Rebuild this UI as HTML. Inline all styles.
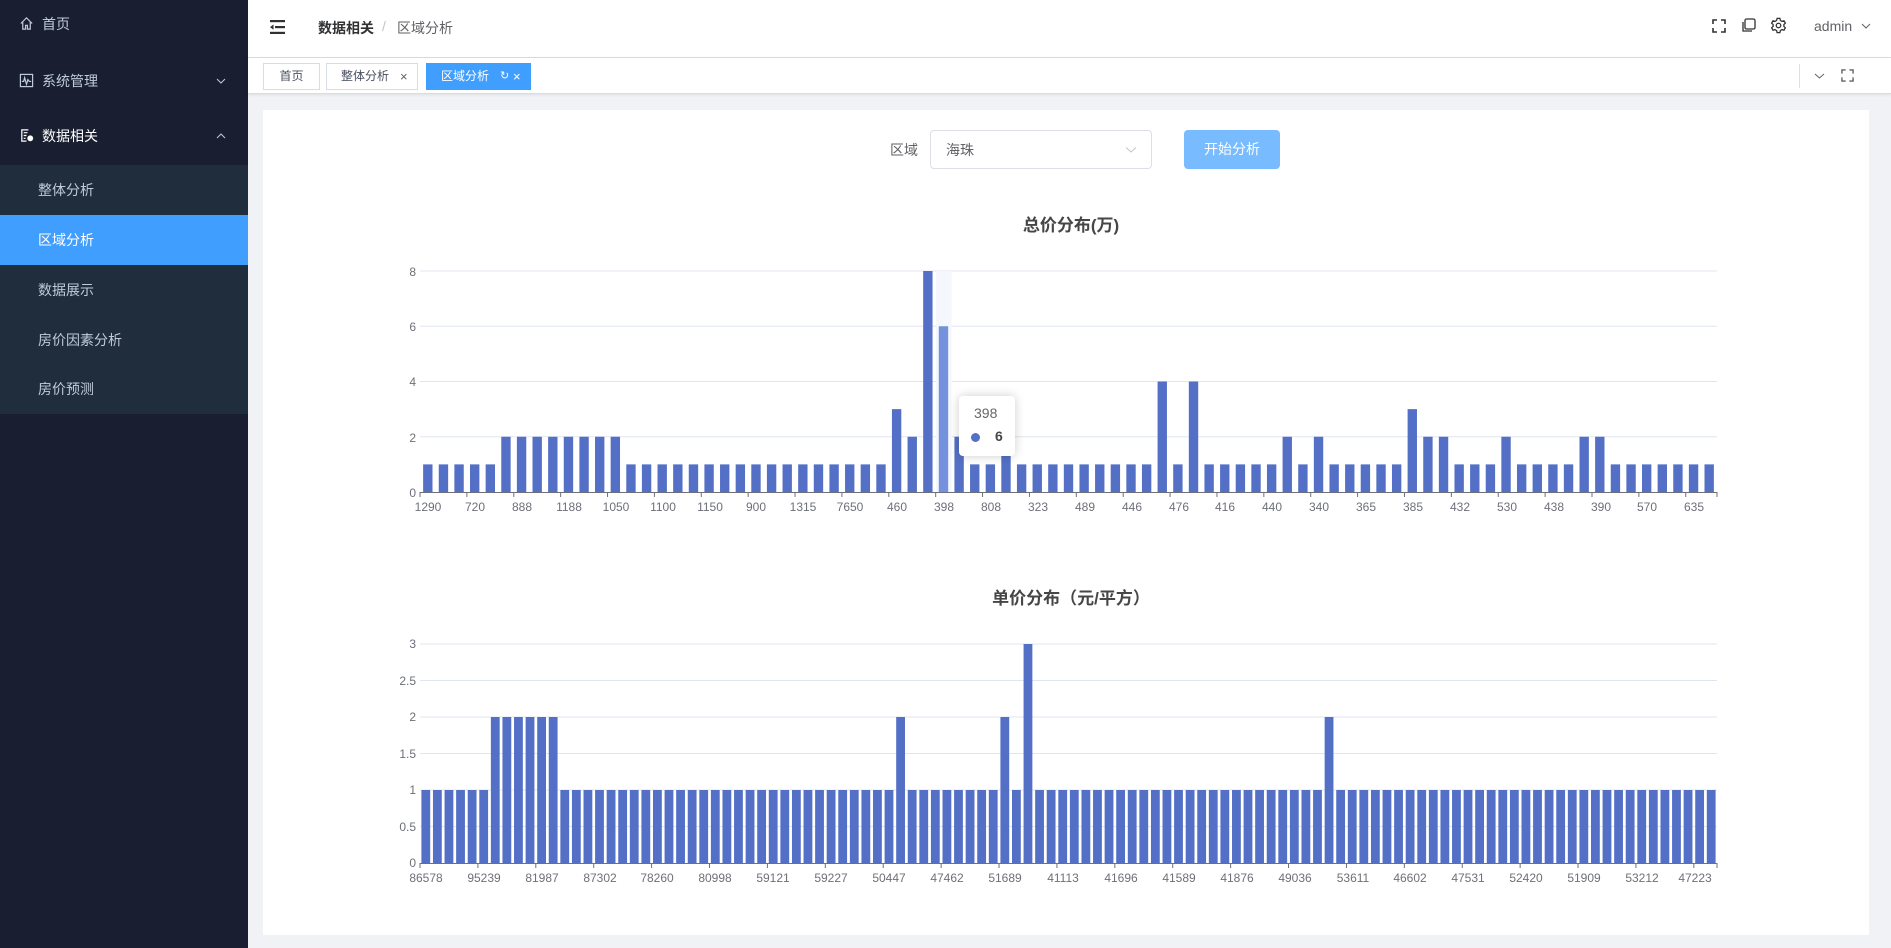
<!DOCTYPE html>
<html><head><meta charset="utf-8">
<style>
*{margin:0;padding:0;box-sizing:border-box}
body{width:1891px;height:948px;overflow:hidden;font-family:"Liberation Sans","Noto Sans CJK SC",sans-serif;background:#f0f2f5;position:relative;color:#303133}
.abs{position:absolute}
#side{left:0;top:0;width:248px;height:948px;background:#191f30}
.mi{position:absolute;left:0;width:248px;color:#bfcbd9;font-size:14px;line-height:20px}
.sub{position:absolute;left:0;top:165px;width:248px;height:249px;background:#1f2d3d}
.si{position:absolute;left:0;width:248px;height:50px;line-height:50px;padding-left:38px;color:#bfcbd9;font-size:14px}
.si.act{background:#409eff;color:#fff}
#hdr{left:248px;top:0;width:1643px;height:58px;background:#fff;border-bottom:1px solid #d8dce5}
#tags{left:248px;top:58px;width:1643px;height:36px;background:#fff;border-bottom:1px solid #d8dce5;box-shadow:0 1px 3px rgba(0,0,0,.08)}
.tag{position:absolute;top:5px;height:27px;line-height:25px;border:1px solid #d8dce5;font-size:12px;color:#495060;background:#fff}
#card{left:263px;top:110px;width:1606px;height:825px;background:#fff}
</style></head><body>
<div id="side" class="abs">
  <div class="mi" style="top:14px">
    <svg class="abs" style="left:19px;top:2px" width="15" height="15" viewBox="0 0 16 16" fill="none" stroke="#bfcbd9" stroke-width="1.3"><path d="M2 8 L8 2 L14 8 M4 6.5 V14 H7 V10 H9 V14 H12 V6.5"/></svg>
    <span class="abs" style="left:42px">首页</span></div>
  <div class="mi" style="top:71px">
    <svg class="abs" style="left:19px;top:2px" width="15" height="15" viewBox="0 0 16 16" fill="none" stroke="#bfcbd9" stroke-width="1.3"><rect x="1.5" y="1.5" width="13" height="13"/><path d="M3 9 H5 L6 5 L8 12 L9.5 7 L11 9 H13"/></svg>
    <span class="abs" style="left:42px">系统管理</span>
    <svg class="abs" style="left:216px;top:5px" width="10" height="10" viewBox="0 0 10 10" fill="none" stroke="#bfcbd9"><path d="M1 3 L5 7 L9 3"/></svg></div>
  <div class="mi" style="top:126px;color:#fff">
    <svg class="abs" style="left:19px;top:2px" width="15" height="15" viewBox="0 0 16 16" fill="none" stroke="#fff" stroke-width="1.3"><path d="M10 2 H3 V14 H8 M5 5 H9 M5 8 H8 M5 11 H7"/><circle cx="12" cy="11" r="2.5" fill="#fff"/></svg>
    <span class="abs" style="left:42px">数据相关</span>
    <svg class="abs" style="left:216px;top:5px" width="10" height="10" viewBox="0 0 10 10" fill="none" stroke="#bfcbd9"><path d="M1 7 L5 3 L9 7"/></svg></div>
  <div class="sub">
    <div class="si" style="top:0">整体分析</div>
    <div class="si act" style="top:50px">区域分析</div>
    <div class="si" style="top:100px">数据展示</div>
    <div class="si" style="top:150px">房价因素分析</div>
    <div class="si" style="top:199px">房价预测</div>
  </div>
</div>
<div id="hdr" class="abs">
  <svg class="abs" style="left:22px;top:20px" width="15" height="14" viewBox="0 0 15 14" fill="#303133"><rect x="0" y="0" width="15" height="2.2"/><rect x="5" y="6" width="10" height="2.2"/><rect x="0" y="11.8" width="15" height="2.2"/><path d="M0 7.1 L3.5 4.5 V9.7Z"/></svg>
  <span class="abs" style="left:70px;top:18px;font-size:14px;font-weight:bold;color:#303133">数据相关</span>
  <span class="abs" style="left:134px;top:18px;font-size:14px;color:#c0c4cc">/</span>
  <span class="abs" style="left:149px;top:18px;font-size:14px;color:#606266">区域分析</span>
  <svg class="abs" style="left:1464px;top:19px" width="14" height="14" viewBox="0 0 14 14" fill="none" stroke="#303133" stroke-width="1.6"><path d="M1 5V1H5M9 1H13V5M13 9V13H9M5 13H1V9"/></svg>
  <svg class="abs" style="left:1493px;top:18px" width="15" height="15" viewBox="0 0 15 15" fill="none" stroke="#303133" stroke-width="1.3"><rect x="4" y="1" width="10" height="10" rx="1.5"/><path d="M2 4V13H11"/></svg>
  <svg class="abs" style="left:1522px;top:17px" width="17" height="17" viewBox="0 0 24 24" fill="none" stroke="#303133" stroke-width="1.8"><circle cx="12" cy="12" r="3.2"/><path d="M10 2h4l.6 2.8 2.4 1.4 2.7-.9 2 3.4-2.1 1.9v2.8l2.1 1.9-2 3.4-2.7-.9-2.4 1.4L14 22h-4l-.6-2.8-2.4-1.4-2.7.9-2-3.4 2.1-1.9v-2.8L2.3 8.7l2-3.4 2.7.9 2.4-1.4z"/></svg>
  <span class="abs" style="left:1566px;top:18px;font-size:14px;color:#606266">admin</span>
  <svg class="abs" style="left:1613px;top:22px" width="10" height="8" viewBox="0 0 10 8" fill="none" stroke="#606266"><path d="M1 2 L5 6 L9 2"/></svg>
</div>
<div id="tags" class="abs">
  <div class="tag" style="left:15px;width:57px;text-align:center">首页</div>
  <div class="tag" style="left:78px;width:92px;padding-left:14px">整体分析<span class="abs" style="left:73px;top:0;font-size:13px;color:#606266">×</span></div>
  <div class="tag" style="left:178px;width:105px;padding-left:14px;background:#409eff;border-color:#409eff;color:#fff">区域分析<span class="abs" style="left:73px;top:0;font-size:11px">↻</span><span class="abs" style="left:86px;top:0;font-size:13px">×</span></div>
  <div class="abs" style="left:1551px;top:-1px;width:1px;height:24px;background:#dcdfe6;top:6px"></div>
  <svg class="abs" style="left:1566px;top:14px" width="11" height="8" viewBox="0 0 11 8" fill="none" stroke="#606266"><path d="M1 2 L5.5 6 L10 2"/></svg>
  <svg class="abs" style="left:1593px;top:11px" width="13" height="13" viewBox="0 0 14 14" fill="none" stroke="#606266" stroke-width="1.5"><path d="M1 5V1H5M9 1H13V5M13 9V13H9M5 13H1V9"/></svg>
</div>
<div id="card" class="abs">
  <span class="abs" style="left:627px;top:30px;font-size:14px;color:#606266">区域</span>
  <div class="abs" style="left:667px;top:20px;width:222px;height:39px;border:1px solid #dcdfe6;border-radius:4px">
    <span class="abs" style="left:15px;top:9px;font-size:14px;color:#606266">海珠</span>
    <svg class="abs" style="left:194px;top:15px" width="12" height="8" viewBox="0 0 12 8" fill="none" stroke="#c0c4cc"><path d="M1 1.5 L6 6 L11 1.5"/></svg>
  </div>
  <div class="abs" style="left:921px;top:20px;width:96px;height:39px;border-radius:4px;background:#79bbff;color:#fff;font-size:14px;text-align:center;line-height:39px">开始分析</div>
</div>
<svg class="abs" style="left:0;top:0" width="1891" height="948" id="ch">
 <g font-family="Liberation Sans, Noto Sans CJK SC, sans-serif">
  <text x="1071" y="231" text-anchor="middle" font-size="17" font-weight="bold" fill="#464646">总价分布(万)</text>
  <text x="1071" y="604" text-anchor="middle" font-size="17" font-weight="bold" fill="#464646">单价分布（元/平方）</text>
  <g id="grid" stroke="#e0e6f1" stroke-width="1"></g>
  <rect x="936" y="271" width="15.6" height="221" fill="#f5f7fc"/>
  <g id="bars" fill="#5470c6"></g>
  <g id="axes" stroke="#6e7079" stroke-width="1"></g>
  <g font-size="12" fill="#6e7079" text-anchor="end">
   <text x="416" y="276">8</text><text x="416" y="331">6</text><text x="416" y="386">4</text><text x="416" y="442">2</text><text x="416" y="497">0</text>
   <text x="416" y="648">3</text><text x="416" y="685">2.5</text><text x="416" y="721">2</text><text x="416" y="758">1.5</text><text x="416" y="794">1</text><text x="416" y="831">0.5</text><text x="416" y="867">0</text>
  </g>
  <g font-size="12" fill="#6e7079" text-anchor="middle" id="xl1">
   <text x="428" y="511">1290</text><text x="475" y="511">720</text><text x="522" y="511">888</text><text x="569" y="511">1188</text><text x="616" y="511">1050</text><text x="663" y="511">1100</text><text x="710" y="511">1150</text><text x="756" y="511">900</text><text x="803" y="511">1315</text><text x="850" y="511">7650</text><text x="897" y="511">460</text><text x="944" y="511">398</text><text x="991" y="511">808</text><text x="1038" y="511">323</text><text x="1085" y="511">489</text><text x="1132" y="511">446</text><text x="1179" y="511">476</text><text x="1225" y="511">416</text><text x="1272" y="511">440</text><text x="1319" y="511">340</text><text x="1366" y="511">365</text><text x="1413" y="511">385</text><text x="1460" y="511">432</text><text x="1507" y="511">530</text><text x="1554" y="511">438</text><text x="1601" y="511">390</text><text x="1647" y="511">570</text><text x="1694" y="511">635</text>
  </g>
  <g font-size="12" fill="#6e7079" text-anchor="middle">
   <text x="426" y="882">86578</text><text x="484" y="882">95239</text><text x="542" y="882">81987</text><text x="600" y="882">87302</text><text x="657" y="882">78260</text><text x="715" y="882">80998</text><text x="773" y="882">59121</text><text x="831" y="882">59227</text><text x="889" y="882">50447</text><text x="947" y="882">47462</text><text x="1005" y="882">51689</text><text x="1063" y="882">41113</text><text x="1121" y="882">41696</text><text x="1179" y="882">41589</text><text x="1237" y="882">41876</text><text x="1295" y="882">49036</text><text x="1353" y="882">53611</text><text x="1410" y="882">46602</text><text x="1468" y="882">47531</text><text x="1526" y="882">52420</text><text x="1584" y="882">51909</text><text x="1642" y="882">53212</text><text x="1695" y="882">47223</text>
  </g>
 </g>
</svg>
<div class="abs" style="left:959px;top:396px;width:56px;height:60px;background:#fff;border-radius:4px;box-shadow:0 0 10px rgba(0,0,0,.2);font-family:'Liberation Sans',sans-serif">
  <span class="abs" style="left:15px;top:9px;font-size:14px;color:#666">398</span>
  <span class="abs" style="left:12px;top:37px;width:9px;height:9px;border-radius:50%;background:#5470c6"></span>
  <span class="abs" style="left:36px;top:32px;font-size:14px;font-weight:bold;color:#464646">6</span>
</div>
<script>
var NS="http://www.w3.org/2000/svg";
function el(p,t,a){var e=document.createElementNS(NS,t);for(var k in a)e.setAttribute(k,a[k]);p.appendChild(e);}
var g=document.getElementById('grid'),b=document.getElementById('bars'),ax=document.getElementById('axes');
for(var i=0;i<4;i++){var y=271+i*55.25;el(g,'line',{x1:420,x2:1717,y1:y,y2:y});}
for(var i=0;i<6;i++){var y=644+i*36.5;el(g,'line',{x1:420,x2:1717,y1:y,y2:y});}
var v1=[1,1,1,1,1,2,2,2,2,2,2,2,2,1,1,1,1,1,1,1,1,1,1,1,1,1,1,1,1,1,3,2,8,6,2,1,1,2,1,1,1,1,1,1,1,1,1,4,1,4,1,1,1,1,1,2,1,2,1,1,1,1,1,3,2,2,1,1,1,2,1,1,1,1,2,2,1,1,1,1,1,1,1];
var w1=1297/83;
v1.forEach(function(v,i){var h=v*221/8;el(b,'rect',{x:420+w1*i+w1*0.2,y:492-h,width:w1*0.6,height:h,fill:i==33?'#7391dc':'#5470c6'});});
var w2=1297/112;
for(var i=0;i<112;i++){var v=1;if(i>=6&&i<=11)v=2;if(i==41||i==50||i==78)v=2;if(i==52)v=3;var h=v*219/3;el(b,'rect',{x:420+w2*i+w2*0.12,y:863-h,width:w2*0.76,height:h});}
el(ax,'line',{x1:420,x2:1717,y1:492.5,y2:492.5});el(ax,'line',{x1:420,x2:1717,y1:863.5,y2:863.5});
for(var i=0;i<=83;i+=3)el(ax,'line',{x1:420+w1*i,x2:420+w1*i,y1:492,y2:497});
el(ax,'line',{x1:1717,x2:1717,y1:492,y2:497});
for(var i=0;i<=112;i+=5)el(ax,'line',{x1:420+w2*i,x2:420+w2*i,y1:863,y2:868});
el(ax,'line',{x1:1717,x2:1717,y1:863,y2:868});
</script>
</body></html>
